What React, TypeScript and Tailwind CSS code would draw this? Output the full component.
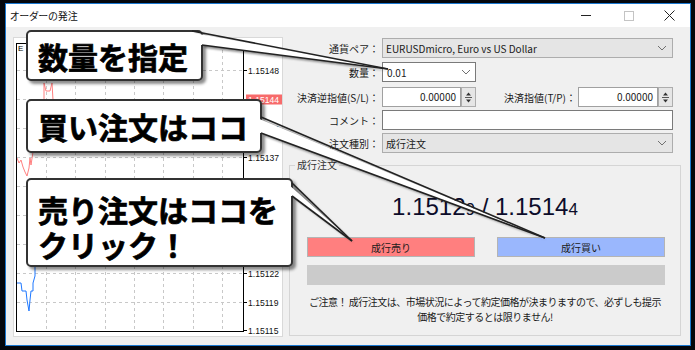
import React from 'react';

const axis = [
  { y: 70, v: '1.15148' },
  { y: 128, v: '1.15140' },
  { y: 157, v: '1.15137' },
  { y: 273, v: '1.15122' },
  { y: 302, v: '1.15119' },
  { y: 330, v: '1.15115' },
];
const gridY = [70, 99, 128, 157, 186, 215, 244, 273, 302];
const gridX = [46, 75, 105, 134, 163, 193, 222];

// chart drawn in page coordinates via the viewBox offset
const Chart = () => (
  <div className="w-[270px] h-[300px] shrink-0 border border-[#d9d9d9] bg-white">
    <svg width="268" height="298" viewBox="14 38 268 298">
      {gridY.map((y) => (
        <line key={y} x1="17" x2="243" y1={y + 0.5} y2={y + 0.5} stroke="#c8c8c8" strokeDasharray="3 3" />
      ))}
      {gridX.map((x) => (
        <line key={x} x1={x + 0.5} x2={x + 0.5} y1="44" y2="331" stroke="#c8c8c8" strokeDasharray="3 3" />
      ))}
      <text x="18" y="51" fontSize="8" fontFamily="Liberation Sans, sans-serif" fill="#000">E</text>
      <polyline
        fill="none"
        stroke="#ff8080"
        strokeWidth="1"
        points="17,158 19,163 21,160 23,167 25,172 27,176 29,168 30,158 31,165 33,152 35,148 38,130 42,112 44,100 44,83 46,91 50,91 52,83 53,100 56,112 62,120"
      />
      <polyline
        fill="none"
        stroke="#1e78ff"
        strokeWidth="1"
        points="17,283 21,283 22,291 26,291 27,300 29,311 30,300 31,291 33,291 33,283 35,276 35,262 40,250"
      />
      <rect x="16.5" y="43.5" width="227" height="288" fill="none" stroke="#000" />
      {[...gridY, 330].map((y) => (
        <line key={y} x1="243" x2="247" y1={y + 0.5} y2={y + 0.5} stroke="#000" />
      ))}
      <rect x="246" y="94.5" width="36" height="10" fill="#f76b6b" />
      <text x="248" y="102.5" fontSize="8.6" fontFamily="Liberation Sans, sans-serif" fill="#fff">1.15144</text>
      {axis.map((a) => (
        <text key={a.v} x="248" y={a.y + 3.5} fontSize="8.6" fontFamily="Liberation Sans, sans-serif" fill="#111">
          {a.v}
        </text>
      ))}
    </svg>
  </div>
);

const Chevron = () => (
  <svg width="10" height="6" viewBox="0 0 10 6">
    <path d="M1 1l4 4 4-4" fill="none" stroke="#707070" strokeWidth="1" />
  </svg>
);

const Spinner = ({ w }: { w: string }) => (
  <div className={`flex h-[20px] ${w}`}>
    <div className="flex-1 border border-[#a0a0a0] bg-white text-right pr-[4px] leading-[18px]">0.00000</div>
    <div className="w-[15px] border border-[#adadad] bg-[#e6e6e6]">
      <svg width="13" height="18" viewBox="0 0 13 18">
        <path d="M4 7.5h5L6.5 4.5z" fill="#333" />
        <line x1="3" x2="10" y1="9.5" y2="9.5" stroke="#555" />
        <path d="M4 11.5h5L6.5 14.5z" fill="#333" />
      </svg>
    </div>
  </div>
);

const Label = ({ children }: { children: React.ReactNode }) => (
  <div className="w-[90px] shrink-0 text-right">{children}</div>
);

const OrderForm = () => (
  <div className="w-[392px] flex flex-col text-[10px] text-[#1a1a1a]">
    <div className="mt-[1px] h-[20px] flex items-center">
      <Label>通貨ペア：</Label>
      <div className="ml-[3px] w-[291px] h-[20px] flex items-center justify-between border border-[#adadad] bg-[#e5e5e5] pl-[3px] pr-[5px]">
        <span>EURUSDmicro, Euro vs US Dollar</span>
        <Chevron />
      </div>
    </div>
    <div className="mt-[4px] h-[20px] flex items-center">
      <Label>数量：</Label>
      <div className="ml-[3px] w-[94px] h-[20px] flex items-center justify-between border border-[#7a7a7a] bg-white pl-[4px] pr-[4px]">
        <span>0.01</span>
        <Chevron />
      </div>
    </div>
    <div className="mt-[5px] h-[20px] flex items-center">
      <Label>決済逆指値(S/L)：</Label>
      <div className="ml-[3px]">
        <Spinner w="w-[94px]" />
      </div>
      <div className="w-[100px] text-right">決済指値(T/P)：</div>
      <div className="ml-[2px]">
        <Spinner w="w-[95px]" />
      </div>
    </div>
    <div className="mt-[3px] h-[20px] flex items-center">
      <Label>コメント：</Label>
      <div className="ml-[3px] w-[291px] h-[20px] border border-[#7a7a7a] bg-white" />
    </div>
    <div className="mt-[3px] h-[20px] flex items-center">
      <Label>注文種別：</Label>
      <div className="ml-[3px] w-[291px] h-[20px] flex items-center justify-between border border-[#adadad] bg-[#e5e5e5] pl-[3px] pr-[5px]">
        <span>成行注文</span>
        <Chevron />
      </div>
    </div>
    <fieldset className="mt-[5px] h-[178px] border border-[#d5d5d5]">
      <legend className="ml-[5px] px-[2px] leading-[14px] text-[#333]">成行注文</legend>
      <div className="mt-[21px] text-center font-['Liberation_Sans',sans-serif] text-[24px] leading-[28px] text-[#0c0c2a]">
        1.1512<span className="text-[17px]">9</span> / 1.1514<span className="text-[17px]">4</span>
      </div>
      <div className="mt-[13px] ml-[17px] w-[358px] flex justify-between">
        <div className="w-[168px] h-[20px] flex items-center justify-center border border-[#b4b4b4] bg-[#ff7f7f]">成行売り</div>
        <div className="w-[168px] h-[20px] flex items-center justify-center border border-[#b4b4b4] bg-[#9ab7fd]">成行買い</div>
      </div>
      <div className="mt-[8px] ml-[17px] w-[358px] h-[20px] bg-[#cbcbcb]" />
      <div className="mt-[9px] text-center leading-[15px] tracking-[-0.5px]">
        <div>ご注意！ 成行注文は、市場状況によって約定価格が決まりますので、必ずしも提示</div>
        <div>価格で約定するとは限りません!</div>
      </div>
    </fieldset>
  </div>
);

const TitleBar = () => (
  <div className="h-[23px] bg-white flex items-center">
    <div className="pl-[4px] flex-1 text-[10px] [font-feature-settings:'palt'] text-[#111]">オーダーの発注</div>
    <div className="w-[48px] flex justify-center">
      <div className="w-[10px] h-px bg-[#222]" />
    </div>
    <div className="w-[38px] flex justify-center">
      <div className="w-[10px] h-[10px] border border-[#c4c4c4]" />
    </div>
    <div className="w-[42px] flex justify-center">
      <svg width="11" height="11" viewBox="0 0 11 11">
        <path d="M0.5 0.5l10 10M10.5 0.5l-10 10" stroke="#222" strokeWidth="1" />
      </svg>
    </div>
  </div>
);

const box =
  'absolute left-[26px] rounded-[5px] border-2 border-[#333] bg-white shadow-[3px_3px_3px_rgba(0,0,0,0.45)] font-bold text-black text-[30px] [-webkit-text-stroke:0.7px_#000]';

type Pt = [number, number];
const wedges: { a: Pt; b: Pt; tip: Pt }[] = [
  { a: [192, 31], b: [202, 45], tip: [388, 69] },
  { a: [261, 117], b: [261, 133], tip: [545, 238] },
  { a: [292, 183], b: [292, 196], tip: [352, 241] },
];

const Callouts = () => (
  <>
    <div className={`${box} top-[30px] w-[177px] h-[51px] flex items-center pl-[10px] leading-none`}>数量を指定</div>
    <div className={`${box} top-[99px] w-[236px] h-[54px] flex items-center pl-[10px] leading-none`}>買い注文はココ</div>
    <div className={`${box} top-[178px] w-[267px] h-[89px] flex flex-col justify-center pt-[8px] pl-[10px] leading-[35px]`}>
      <div>売り注文はココを</div>
      <div>クリック！</div>
    </div>
    <svg className="absolute left-0 top-0 pointer-events-none" width="695" height="350" viewBox="0 0 695 350">
      <defs>
        <filter id="blur" x="-10%" y="-10%" width="120%" height="120%">
          <feGaussianBlur stdDeviation="1.2" />
        </filter>
      </defs>
      {wedges.map(({ a, b, tip }, i) => (
        <g key={i}>
          <polygon
            points={`${a[0] + 3},${a[1] + 3} ${tip[0] + 2},${tip[1] + 2} ${b[0] + 3},${b[1] + 3}`}
            fill="rgba(0,0,0,0.45)"
            filter="url(#blur)"
          />
          <polygon
            points={`${a[0] - 4},${a[1] + 1} ${tip[0]},${tip[1]} ${b[0]},${b[1]} ${b[0] - 4},${b[1]}`}
            fill="#fff"
          />
          <line x1={a[0]} y1={a[1]} x2={tip[0]} y2={tip[1]} stroke="#222" strokeWidth="1.6" />
          <line x1={b[0]} y1={b[1]} x2={tip[0]} y2={tip[1]} stroke="#222" strokeWidth="1.6" />
        </g>
      ))}
    </svg>
  </>
);

export default function App() {
  return (
    <div className="relative w-[695px] h-[350px] overflow-hidden bg-[#05070c] font-['Noto_Sans_CJK_JP',sans-serif]">
      <div className="ml-[5px] mt-[3px] w-[686px] h-[343px] border border-[#1b78d0] bg-[#f0f0f0] flex flex-col">
        <TitleBar />
        <div className="flex pl-[7px] pt-[10px] gap-[6px]">
          <Chart />
          <OrderForm />
        </div>
      </div>
      <Callouts />
    </div>
  );
}
